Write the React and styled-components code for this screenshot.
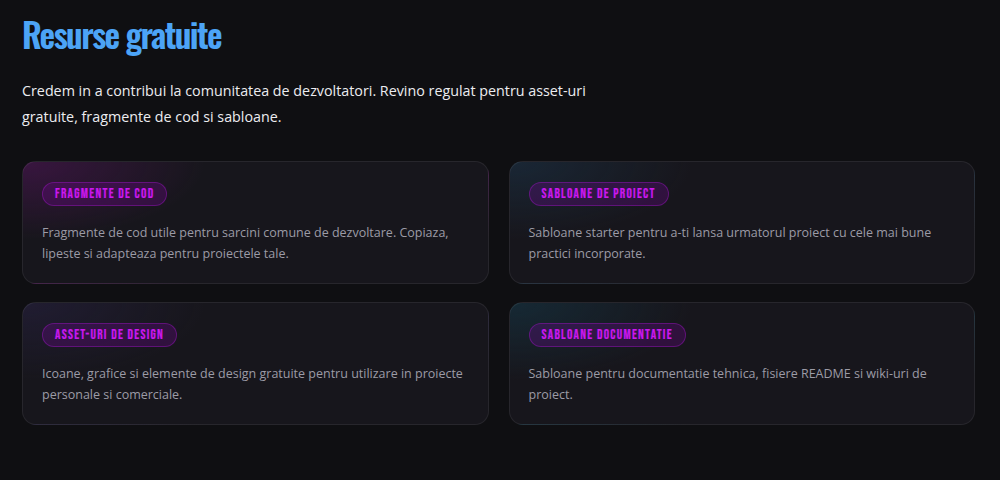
import React from "react";
import styled, { createGlobalStyle } from "styled-components";

const Global = createGlobalStyle`
  html, body { margin: 0; padding: 0; background: #0f0f12; }
  body { font-family: "Open Sans", "Noto Sans", sans-serif; }
  * { box-sizing: border-box; }
`;

const Page = styled.main`
  width: 1000px;
  height: 480px;
  background: #0f0f12;
  padding: 11px 25px 0 22px;
`;

const Title = styled.h1`
  margin: 0;
  font-family: "Oswald", "Roboto Condensed", sans-serif;
  font-weight: 600;
  font-size: 34px;
  line-height: 46px;
  letter-spacing: -1.6px;
  color: #4ca4f6;
`;

const Intro = styled.p`
  margin: 21px 0 0;
  max-width: 620px;
  font-size: 14.3px;
  line-height: 26px;
  color: #ececf0;
`;

const Grid = styled.section`
  margin-top: 31px;
  display: grid;
  grid-template-columns: 1fr 1fr;
  column-gap: 20px;
  row-gap: 18px;
`;

const Card = styled.article`
  height: 123px;
  border-radius: 14px;
  border: 1px solid rgba(255, 255, 255, 0.07);
  background:
    radial-gradient(ellipse 260px 110px at 0% 0%, ${(p) => p.$tint}, transparent 70%),
    #17161c;
  padding: 19px 19px 0;
`;

const Badge = styled.span`
  display: inline-flex;
  align-items: center;
  height: 24px;
  padding: 1px 12px 0;
  border-radius: 12px;
  background: rgba(140, 0, 180, 0.22);
  border: 1px solid rgba(160, 20, 200, 0.42);
  font-family: "Bebas Neue", "Oswald", sans-serif;
  font-weight: 400;
  font-size: 13.4px;
  letter-spacing: 1.3px;
  text-transform: uppercase;
  color: #cc18f0;
  -webkit-text-stroke: 0.2px #cc18f0;
`;

const Text = styled.p`
  margin: 16px 0 0;
  font-size: 12.5px;
  line-height: 21px;
  color: #9c9ba6;
`;

const items = [
  {
    tag: "Fragmente de cod",
    tint: "rgba(120, 20, 130, 0.35)",
    text: "Fragmente de cod utile pentru sarcini comune de dezvoltare. Copiaza, lipeste si adapteaza pentru proiectele tale.",
  },
  {
    tag: "Sabloane de proiect",
    tint: "rgba(30, 70, 100, 0.35)",
    text: "Sabloane starter pentru a-ti lansa urmatorul proiect cu cele mai bune practici incorporate.",
  },
  {
    tag: "Asset-uri de design",
    tint: "rgba(50, 40, 90, 0.35)",
    text: "Icoane, grafice si elemente de design gratuite pentru utilizare in proiecte personale si comerciale.",
  },
  {
    tag: "Sabloane documentatie",
    tint: "rgba(20, 70, 90, 0.4)",
    text: "Sabloane pentru documentatie tehnica, fisiere README si wiki-uri de proiect.",
  },
];

export default function App() {
  return (
    <>
      <Global />
      <Page>
        <Title>Resurse gratuite</Title>
        <Intro>
          Credem in a contribui la comunitatea de dezvoltatori. Revino regulat pentru asset-uri gratuite, fragmente de cod si sabloane.
        </Intro>
        <Grid>
          {items.map((it) => (
            <Card key={it.tag} $tint={it.tint}>
              <Badge>{it.tag}</Badge>
              <Text>{it.text}</Text>
            </Card>
          ))}
        </Grid>
      </Page>
    </>
  );
}
